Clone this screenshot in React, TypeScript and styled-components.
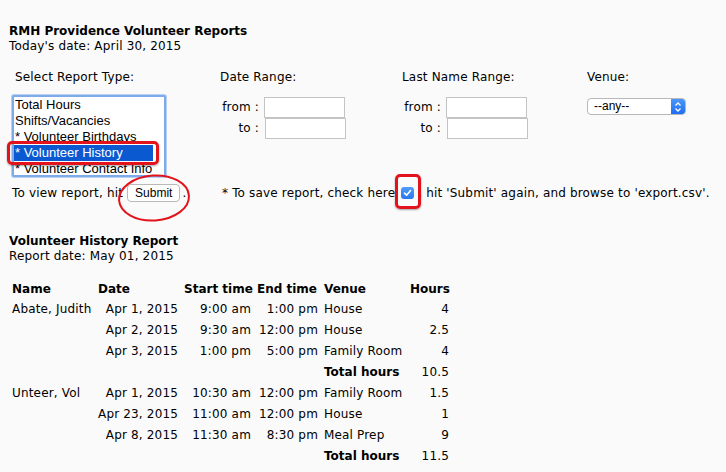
import React from "react";
import styled, { createGlobalStyle } from "styled-components";

const Global = createGlobalStyle`
  html, body { margin: 0; padding: 0; background: #fafafa; }
  body {
    font-family: "DejaVu Sans", Verdana, sans-serif;
    font-size: 12px;
    letter-spacing: 0.17px;
    color: #000;
  }
`;

const Page = styled.div`
  box-sizing: border-box;
  width: 726px;
  height: 472px;
  overflow: hidden;
  padding: 24px 0 0 9px;
`;

const Title = styled.div`
  font-weight: bold;
  letter-spacing: 0;
  line-height: 15px;
`;

const Line = styled.div`
  line-height: 15px;
`;

const FormGrid = styled.div`
  margin-top: 16px;
  display: grid;
  grid-template-columns: 211px 182px 185px 1fr;
  align-items: start;
`;

const Column = styled.div`
  display: flex;
  flex-direction: column;
`;

const Label = styled.div<{ $pad?: number }>`
  line-height: 15px;
  padding-left: ${(p) => p.$pad ?? 0}px;
  margin-bottom: 12px;
`;

const ListWrap = styled.div`
  position: relative;
  margin: -2px 0 0 3px;
  width: 154px;
`;

const ListBox = styled.div`
  box-sizing: border-box;
  width: 154px;
  height: 82px;
  overflow: hidden;
  background: #fff;
  border: 2px solid #7eaaea;
  box-shadow: 0 0 0 1px #b7d0f3;
  border-radius: 2px;
  padding-right: 11px;
  font-family: "Liberation Sans", Arial, sans-serif;
  font-size: 13px;
  letter-spacing: 0;
`;

const Option = styled.div<{ $selected?: boolean }>`
  height: 16px;
  line-height: 16px;
  padding-left: 1px;
  white-space: nowrap;
  background: ${(p) => (p.$selected ? "#0b59d1" : "transparent")};
  color: ${(p) => (p.$selected ? "#fff" : "#000")};
`;

const RedBox = styled.div<{ $l: number; $t: number; $w: number; $h: number }>`
  position: absolute;
  left: ${(p) => p.$l}px;
  top: ${(p) => p.$t}px;
  width: ${(p) => p.$w}px;
  height: ${(p) => p.$h}px;
  box-sizing: border-box;
  border: 3px solid #e3131b;
  border-radius: 5px;
  box-shadow: 0 1px 2px rgba(0, 0, 0, 0.35);
  pointer-events: none;
`;

const RangeGrid = styled.div`
  display: grid;
  grid-template-columns: 44px 81px;
  grid-auto-rows: 21px;
  align-items: center;
`;

const RangeLabel = styled.span`
  text-align: right;
  padding-right: 5px;
  line-height: 15px;
`;

const TextInput = styled.div<{ $shift?: boolean }>`
  box-sizing: border-box;
  width: 81px;
  height: 21px;
  background: #fff;
  border: 1px solid #c4c4c4;
  margin-left: ${(p) => (p.$shift ? 1 : 0)}px;
`;

const Select = styled.div`
  box-sizing: border-box;
  margin-top: 1px;
  width: 99px;
  height: 17px;
  display: flex;
  background: #fff;
  border: 1px solid #b8b8b8;
  border-radius: 4px;
  overflow: hidden;
  font-family: "Liberation Sans", Arial, sans-serif;
  font-size: 12px;
  letter-spacing: 0;
`;

const SelectText = styled.span`
  flex: 1;
  padding-left: 6px;
  line-height: 15px;
`;

const SelectArrow = styled.span`
  width: 14px;
  display: flex;
  align-items: center;
  justify-content: center;
  background: linear-gradient(#4b97fb, #1d6ef2);
`;

const ActionGrid = styled.div`
  margin-top: 7px;
  display: grid;
  grid-template-columns: 211px 1fr;
  align-items: center;
  height: 18px;
`;

const ActionCell = styled.div<{ $pad: number }>`
  display: flex;
  align-items: center;
  white-space: pre;
  padding-left: ${(p) => p.$pad}px;
  line-height: 15px;
`;

const Anchor = styled.span`
  position: relative;
  display: inline-flex;
`;

const Button = styled.span`
  box-sizing: border-box;
  height: 18px;
  padding: 0 7px;
  margin: 0 2px 0 4px;
  display: inline-flex;
  align-items: center;
  background: #fff;
  border: 1px solid #b9b9b9;
  border-radius: 4px;
  font-family: "Liberation Sans", Arial, sans-serif;
  font-size: 12px;
  letter-spacing: 0;
`;

const Ellipse = styled.svg`
  position: absolute;
  left: -5px;
  top: -11px;
  overflow: visible;
  pointer-events: none;
`;

const Checkbox = styled.span`
  box-sizing: border-box;
  width: 13px;
  height: 12px;
  margin: 0 4px 0 6px;
  border-radius: 3px;
  background: linear-gradient(#4f9cfb, #2a78f0);
  display: inline-flex;
  align-items: center;
  justify-content: center;
`;

const ReportTitle = styled(Title)`
  margin-top: 32px;
`;

const Table = styled.table`
  margin-top: 15px;
  width: 443px;
  border-collapse: collapse;
  table-layout: fixed;
`;

const Th = styled.th<{ $w: number; $align?: string }>`
  width: ${(p) => p.$w}px;
  height: 19px;
  padding: 0 3px;
  text-align: ${(p) => p.$align ?? "left"};
  font-weight: bold;
  letter-spacing: 0;
  white-space: nowrap;
`;

const Td = styled.td<{ $align?: string; $bold?: boolean }>`
  height: 21px;
  padding: 0 3px;
  text-align: ${(p) => p.$align ?? "left"};
  font-weight: ${(p) => (p.$bold ? "bold" : "normal")};
  letter-spacing: ${(p) => (p.$bold ? "0" : "0.17px")};
  white-space: nowrap;
`;

type Row = { name?: string; date?: string; start?: string; end?: string; venue: string; hours: string; total?: boolean };

const rows: Row[] = [
  { name: "Abate, Judith", date: "Apr 1, 2015", start: "9:00 am", end: "1:00 pm", venue: "House", hours: "4" },
  { date: "Apr 2, 2015", start: "9:30 am", end: "12:00 pm", venue: "House", hours: "2.5" },
  { date: "Apr 3, 2015", start: "1:00 pm", end: "5:00 pm", venue: "Family Room", hours: "4" },
  { venue: "Total hours", hours: "10.5", total: true },
  { name: "Unteer, Vol", date: "Apr 1, 2015", start: "10:30 am", end: "12:00 pm", venue: "Family Room", hours: "1.5" },
  { date: "Apr 23, 2015", start: "11:00 am", end: "12:00 pm", venue: "House", hours: "1" },
  { date: "Apr 8, 2015", start: "11:30 am", end: "8:30 pm", venue: "Meal Prep", hours: "9" },
  { venue: "Total hours", hours: "11.5", total: true },
];

export default function App() {
  return (
    <Page>
      <Global />
      <Title>RMH Providence Volunteer Reports</Title>
      <Line>Today's date: April 30, 2015</Line>

      <FormGrid>
        <Column>
          <Label $pad={6}>Select Report Type:</Label>
          <ListWrap>
            <ListBox>
              <Option>Total Hours</Option>
              <Option>Shifts/Vacancies</Option>
              <Option>* Volunteer Birthdays</Option>
              <Option $selected>* Volunteer History</Option>
              <Option>* Volunteer Contact Info</Option>
            </ListBox>
            <RedBox $l={-5} $t={46} $w={152} $h={24} />
          </ListWrap>
        </Column>
        <Column>
          <Label>Date Range:</Label>
          <RangeGrid>
            <RangeLabel>from :</RangeLabel>
            <TextInput />
            <RangeLabel>to :</RangeLabel>
            <TextInput $shift />
          </RangeGrid>
        </Column>
        <Column>
          <Label>Last Name Range:</Label>
          <RangeGrid>
            <RangeLabel>from :</RangeLabel>
            <TextInput />
            <RangeLabel>to :</RangeLabel>
            <TextInput $shift />
          </RangeGrid>
        </Column>
        <Column>
          <Label>Venue:</Label>
          <Select>
            <SelectText>--any--</SelectText>
            <SelectArrow>
              <svg width="8" height="12" viewBox="0 0 8 12">
                <path d="M1.5 4.5 L4 2 L6.5 4.5 M1.5 7.5 L4 10 L6.5 7.5" fill="none" stroke="#fff" strokeWidth="1.3" />
              </svg>
            </SelectArrow>
          </Select>
        </Column>
      </FormGrid>

      <ActionGrid>
        <ActionCell $pad={3}>
          {"To view report, hit"}
          <Anchor>
            <Button>Submit</Button>
            <Ellipse width="76" height="48">
              <ellipse cx="36" cy="25" rx="35" ry="22.5" fill="none" stroke="#e3131b" strokeWidth="2" transform="rotate(-4 36 25)" />
            </Ellipse>
          </Anchor>
          {"."}
        </ActionCell>
        <ActionCell $pad={2}>
          {"* To save report, check here"}
          <Anchor>
            <Checkbox>
              <svg width="9" height="8" viewBox="0 0 9 8">
                <path d="M1.5 4.2 L3.6 6.2 L7.5 1.5" fill="none" stroke="#fff" strokeWidth="1.6" strokeLinecap="round" strokeLinejoin="round" />
              </svg>
            </Checkbox>
            <RedBox $l={0} $t={-13} $w={26} $h={35} />
          </Anchor>
          {", hit 'Submit' again, and browse to 'export.csv'."}
        </ActionCell>
      </ActionGrid>

      <ReportTitle>Volunteer History Report</ReportTitle>
      <Line>Report date: May 01, 2015</Line>

      <Table>
        <thead>
          <tr>
            <Th $w={80}>Name</Th>
            <Th $w={80}>Date</Th>
            <Th $w={67}>Start time</Th>
            <Th $w={61}>End time</Th>
            <Th $w={80}>Venue</Th>
            <Th $w={39} $align="right">Hours</Th>
          </tr>
        </thead>
        <tbody>
          {rows.map((r, i) => (
            <tr key={i}>
              <Td>{r.name ?? ""}</Td>
              <Td $align="right">{r.date ?? ""}</Td>
              <Td $align="right">{r.start ?? ""}</Td>
              <Td $align="right">{r.end ?? ""}</Td>
              <Td $bold={r.total}>{r.venue}</Td>
              <Td $align="right">{r.hours}</Td>
            </tr>
          ))}
        </tbody>
      </Table>
    </Page>
  );
}
